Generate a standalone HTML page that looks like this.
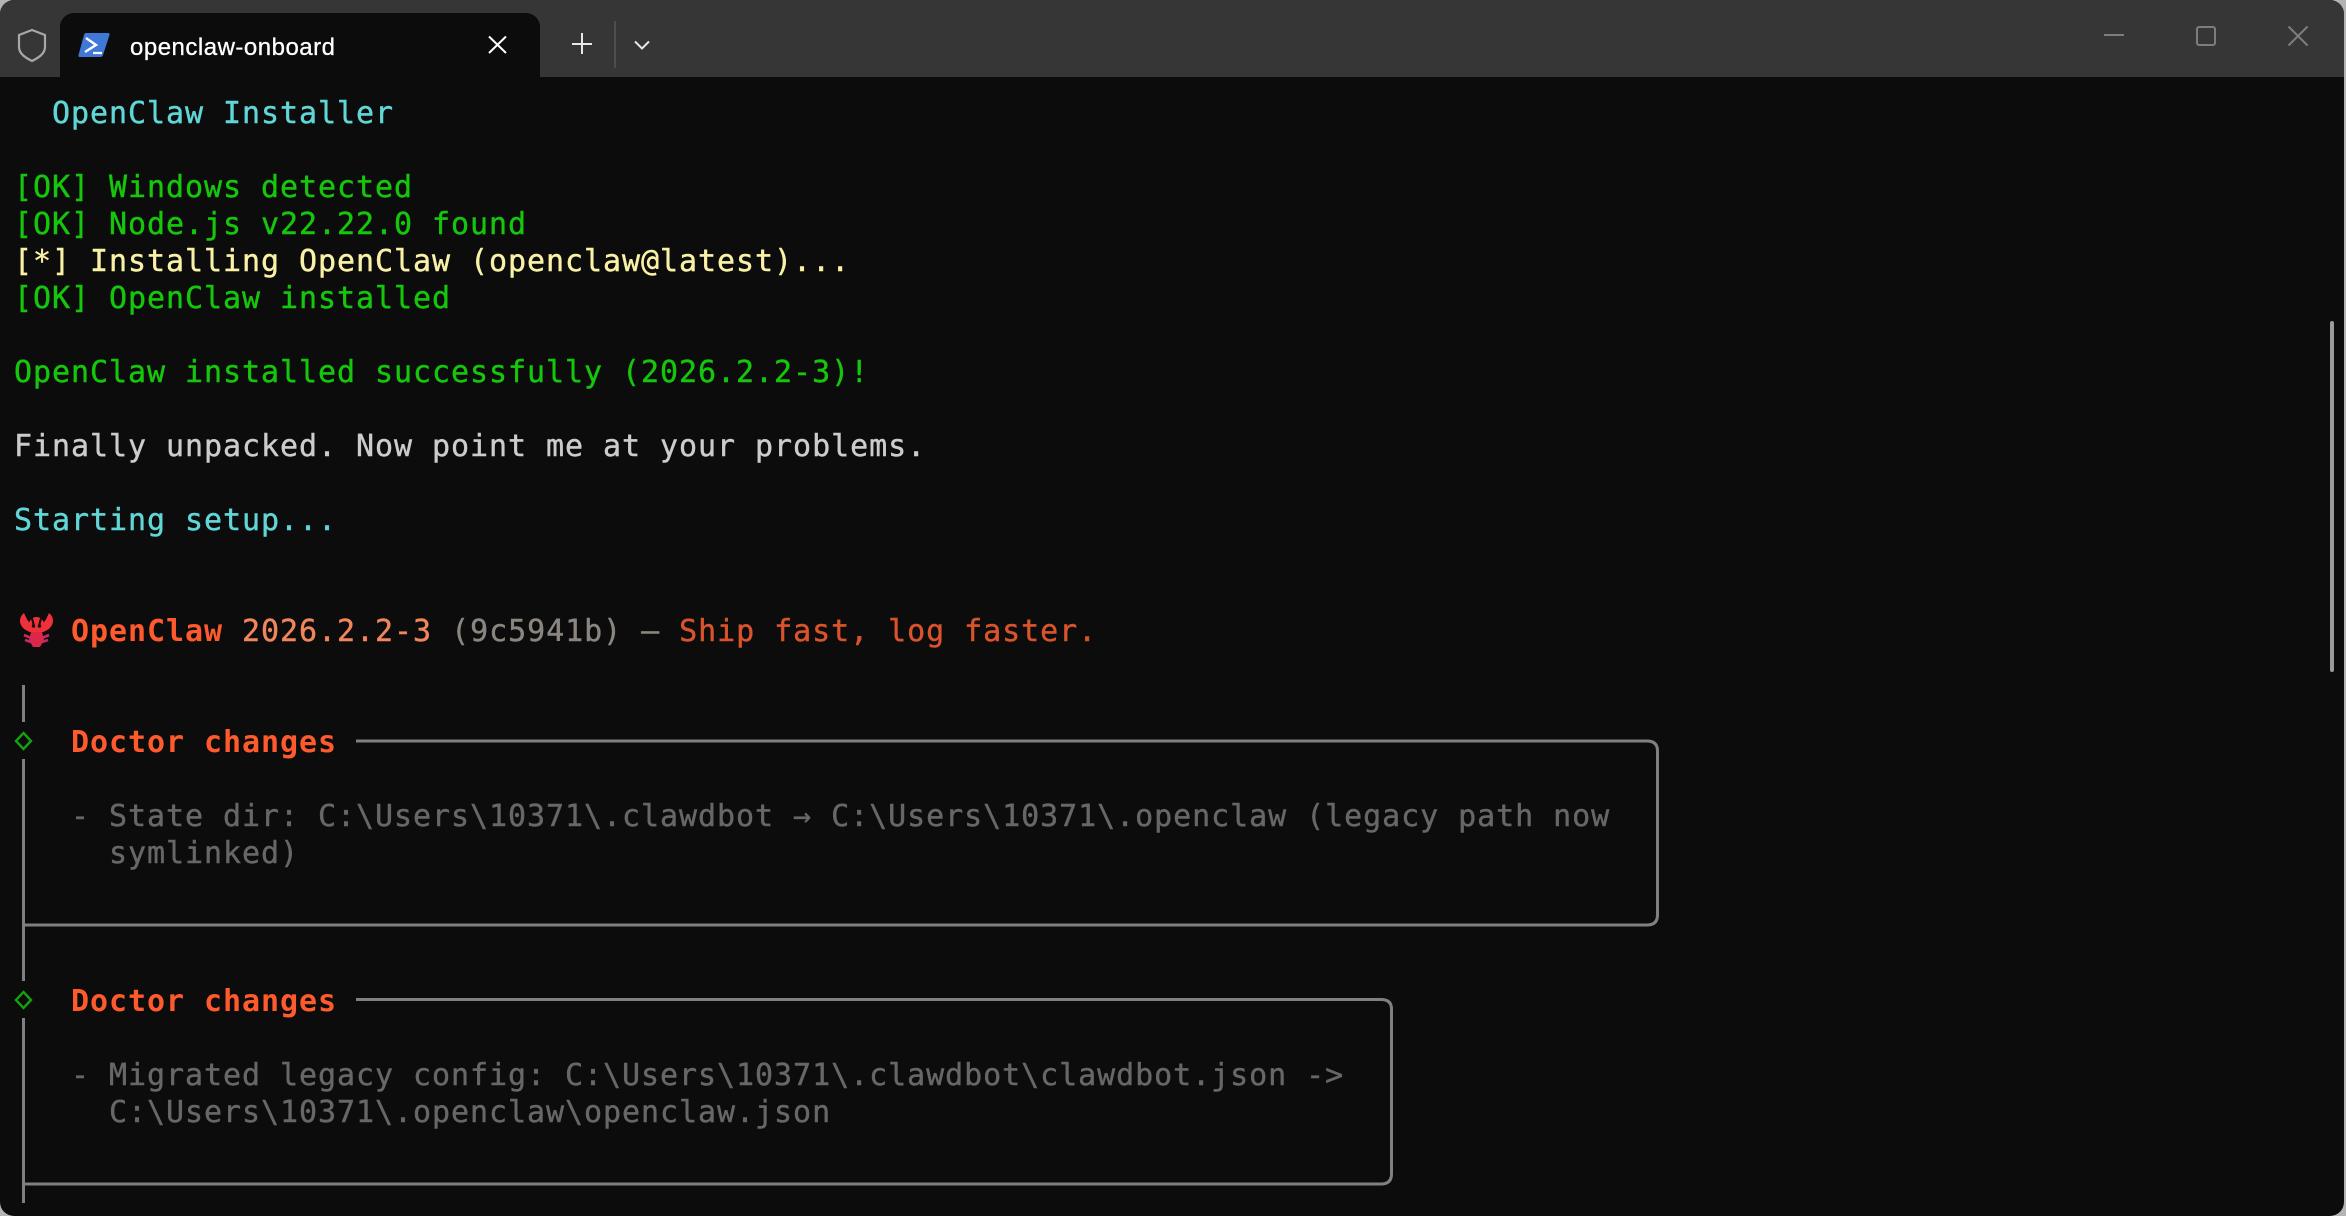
<!DOCTYPE html>
<html><head><meta charset="utf-8"><title>openclaw-onboard</title>
<style>
html,body{margin:0;padding:0;width:2346px;height:1216px;overflow:hidden;background:#b4b4b4}
#win{position:absolute;left:0;top:0;width:2344px;height:1216px;background:#0c0c0c;border-radius:14px;overflow:hidden}
#bar{position:absolute;left:0;top:0;width:2344px;height:77px;background:#363636}
#tab{position:absolute;left:60px;top:13px;width:480px;height:64px;background:#0c0c0c;border-radius:14px 14px 0 0}
#title{position:absolute;left:130px;top:30px;font:500 24px/36px "Liberation Sans",sans-serif;color:#fff;letter-spacing:.5px;white-space:nowrap;-webkit-text-stroke:.3px #fff}
svg{position:absolute;left:0;top:0}
.l{position:absolute;left:14px;height:37px;font-family:"DejaVu Sans Mono","Liberation Mono",monospace;font-size:30px;letter-spacing:.94px;line-height:37px;white-space:pre;color:#ccc;-webkit-text-stroke:.4px currentColor}
.c{color:#61d6d6}.g{color:#16c60c}.y{color:#f9f1a5}.w{color:#cccccc}.d{color:#676767}
.o{color:#ff5a2d;font-weight:bold;-webkit-text-stroke:0}.v{color:#f0865c}.h{color:#8b8580}.r{color:#d9532c}
</style></head><body>
<div id="win">
<div id="bar"></div>
<div id="tab"></div>
<div id="title">openclaw-onboard</div>

<div class="l c" style="top:94.500px">  OpenClaw Installer</div>
<div class="l g" style="top:168.500px">[OK] Windows detected</div>
<div class="l g" style="top:205.500px">[OK] Node.js v22.22.0 found</div>
<div class="l y" style="top:242.500px">[*] Installing OpenClaw (openclaw@latest)...</div>
<div class="l g" style="top:279.500px">[OK] OpenClaw installed</div>
<div class="l g" style="top:353.500px">OpenClaw installed successfully (2026.2.2-3)!</div>
<div class="l w" style="top:427.500px">Finally unpacked. Now point me at your problems.</div>
<div class="l c" style="top:501.500px">Starting setup...</div>
<div class="l" style="top:612.500px">   <span class="o">OpenClaw</span> <span class="v">2026.2.2-3</span> <span class="h">(9c5941b) — </span><span class="r">Ship fast, log faster.</span></div>
<div class="l o" style="top:723.500px">   Doctor changes</div>
<div class="l d" style="top:797.500px">   - State dir: C:\Users\10371\.clawdbot → C:\Users\10371\.openclaw (legacy path now</div>
<div class="l d" style="top:834.500px">     symlinked)</div>
<div class="l o" style="top:982.500px">   Doctor changes</div>
<div class="l d" style="top:1056.500px">   - Migrated legacy config: C:\Users\10371\.clawdbot\clawdbot.json -&gt;</div>
<div class="l d" style="top:1093.500px">     C:\Users\10371\.openclaw\openclaw.json</div>

<svg width="2346" height="1216" viewBox="0 0 2346 1216" fill="none">
  <!-- shield -->
  <path d="M32 30 L45 35 V47 C45 54 38 58 32 61 C26 58 19 54 19 47 V35 Z" stroke="#a8a8a8" stroke-width="2.2" stroke-linejoin="round"/>
  <!-- powershell -->
  <path d="M86 33 H108 Q110 33 109.500 35 L103 55 Q102.500 57 100 57 H80 Q78 57 78.500 55 L84 35 Q84.500 33 86 33 Z" fill="#3f78d6"/>
  <path d="M86 38 L96 45 L85 52" stroke="#fff" stroke-width="2.400"/>
  <path d="M93 53 H102" stroke="#fff" stroke-width="2.200"/>
  <!-- tab close -->
  <path d="M489 36.500 L506 53 M506 36.500 L489 53" stroke="#fff" stroke-width="2"/>
  <!-- plus, divider, chevron -->
  <path d="M582 33 V54 M572 44 H592" stroke="#e8e8e8" stroke-width="2"/>
  <path d="M615 21 V68" stroke="#4d4d4d" stroke-width="2"/>
  <path d="M635 41.500 L642 48.500 L649 41.500" stroke="#e8e8e8" stroke-width="2"/>
  <!-- window controls -->
  <path d="M2104 35 H2124" stroke="#7d7d7d" stroke-width="2"/>
  <rect x="2197" y="27" width="18" height="18" rx="2" stroke="#7d7d7d" stroke-width="2"/>
  <path d="M2288.500 26.500 L2307.500 45.500 M2307.500 26.500 L2288.500 45.500" stroke="#7d7d7d" stroke-width="2"/>
  <!-- scrollbar -->
  <rect x="2330" y="321" width="4" height="351" rx="2" fill="#9a9a9a"/>
  <!-- lobster -->
  <g>
    <path d="M24 613 C20 616 19 621 21 625 C23 629 27 631 30 632 L43 632 C46 631 50 629 52 625 C54 621 53 616 49 613 C47 617 46 620 44 622 L44 628 L29 628 L29 622 C27 620 26 617 24 613 Z" fill="#f0313c"/>
    <ellipse cx="36.500" cy="626" rx="8" ry="9" fill="#ee3038"/>
    <path d="M31 632 H42 L44 640 L40 647 H33 L29 640 Z" fill="#dc2848"/>
    <path d="M24 635 L31 638 M25 640 L31 642 M49 635 L42 638 M48 640 L42 642" stroke="#c9295f" stroke-width="2.600"/>
    <path d="M34 627 C33 621 32 617 29 615 M39 627 C40 621 41 617 44 615" stroke="#160a0a" stroke-width="2"/>
    <circle cx="33.500" cy="626" r="1.700" fill="#160a0a"/><circle cx="39.500" cy="626" r="1.700" fill="#160a0a"/>
  </g>
  <!-- rails -->
  <path d="M23.500 685 V722" stroke="#7f7f7f" stroke-width="3"/>
  <path d="M23.500 759 V981" stroke="#7f7f7f" stroke-width="3"/>
  <path d="M23.500 1018 V1203" stroke="#7f7f7f" stroke-width="3"/>
  <path d="M23.500 733 L31 741 L23.500 749 L16 741 Z" stroke="#16a00e" stroke-width="2.400"/>
  <path d="M23.500 992 L31 1000 L23.500 1008 L16 1000 Z" stroke="#16a00e" stroke-width="2.400"/>
  <!-- boxes -->
  <path d="M356 741 H1647 Q1657.500 741 1657.500 751 V915 Q1657.500 925 1647 925 H25" stroke="#808080" stroke-width="3"/>
  <path d="M356 999.500 H1381 Q1391.500 999.500 1391.500 1009 V1174 Q1391.500 1184 1381 1184 H25" stroke="#808080" stroke-width="3"/>
</svg>
</div>
</body></html>
